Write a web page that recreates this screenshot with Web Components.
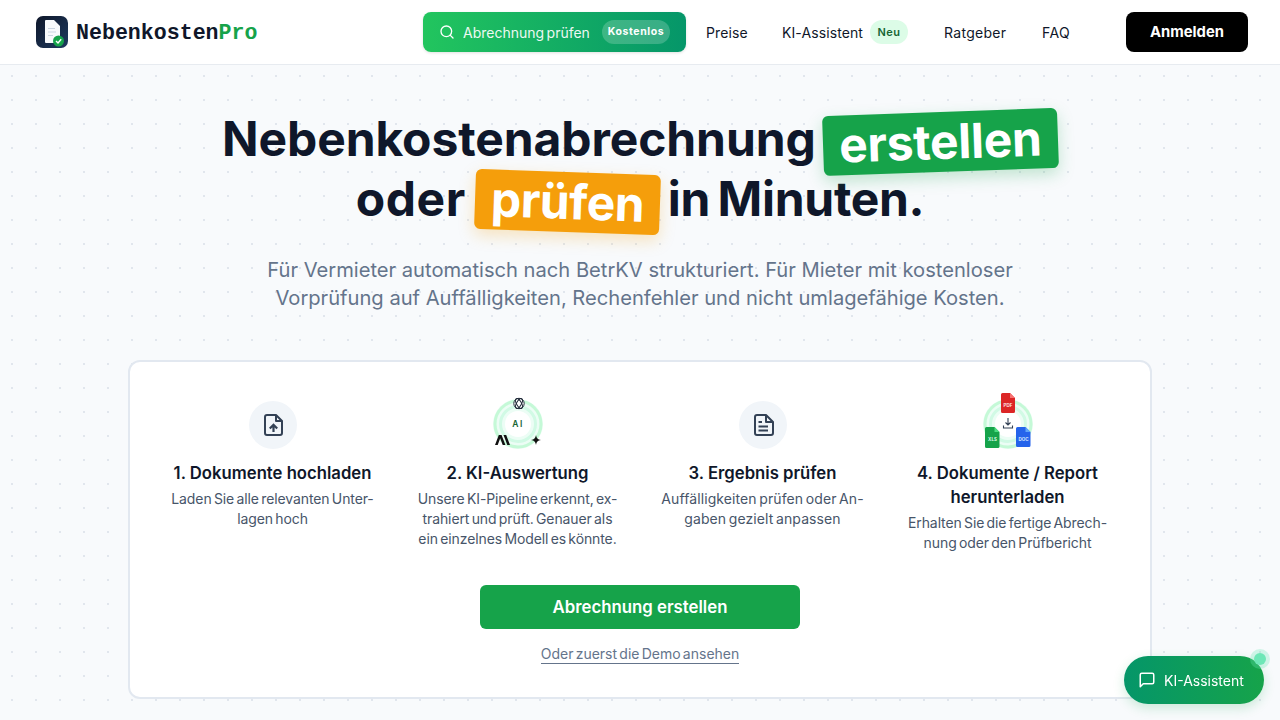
<!DOCTYPE html>
<html lang="de">
<head>
<meta charset="utf-8">
<title>NebenkostenPro</title>
<style>
    html, body { margin: 0; height: 720px; overflow: hidden; }
    body { font-family: Inter, "Liberation Sans", sans-serif; color: #0f172a; background: #f8fafc; }
    svg { overflow: visible; }
</style>
</head>
<body>
<site-header></site-header>
<main-hero>
    <hero-title></hero-title>
    <steps-card>
        <step-item heading="1. Dokumente hochladen" text="Laden Sie alle relevanten Unter-<br>lagen hoch">
            <svg slot="icon" width="48" height="48" viewBox="0 0 48 48">
                <circle cx="24" cy="24" r="24" fill="#f1f5f9"/>
                <path d="M27 14h-9a2 2 0 0 0-2 2v16a2 2 0 0 0 2 2h13a2 2 0 0 0 2-2V20z" fill="none" stroke="#334155" stroke-width="2" stroke-linejoin="round"/>
                <path d="M27 14v6h6" fill="none" stroke="#334155" stroke-width="2" stroke-linejoin="round"/>
                <path d="M24.500 31v-7M20.800 27.500l3.700-3.700 3.700 3.700" fill="none" stroke="#334155" stroke-width="2.200"/>
            </svg>
        </step-item>
        <step-item heading="2. KI-Auswertung" text="Unsere KI-Pipeline erkennt, ex-<br>trahiert und prüft. Genauer als<br>ein einzelnes Modell es könnte.">
            <svg slot="icon" width="60" height="60" viewBox="0 0 60 60" style="margin:-7px -6px -5px">
                <circle cx="30" cy="30" r="25" fill="#ecfdf5"/>
                <circle cx="30" cy="30" r="23" fill="none" stroke="#bbf7d0" stroke-width="3" opacity=".8"/>
                <circle cx="30" cy="30" r="17.500" fill="none" stroke="#d1fae5" stroke-width="3"/>
                <circle cx="30" cy="30" r="13" fill="#fff"/>
                <text x="30" y="33" text-anchor="middle" font-family="Inter, sans-serif" font-size="8.500" font-weight="600" letter-spacing="1.400" fill="#166534">AI</text>
                <g fill="none" stroke="#1f2937" stroke-width="1">
                    <circle cx="31" cy="9.500" r="5.200" fill="#fff"/>
                    <ellipse cx="31" cy="9.500" rx="5.500" ry="2.400" transform="rotate(60 31 9.500)"/>
                    <ellipse cx="31" cy="9.500" rx="5.500" ry="2.400" transform="rotate(-60 31 9.500)"/>
                </g>
                <path d="M7 51l3.800-10h2.800l3.800 10h-2.700l-2.500-6.800-2.500 6.800zM15.500 41h2.700l3.800 10h-2.700z" fill="#111"/>
                <path d="M48 41c.7 3.400 1.600 4.300 5 5-3.400.7-4.300 1.600-5 5-.7-3.400-1.600-4.300-5-5 3.400-.7 4.300-1.600 5-5z" fill="#111"/>
            </svg>
        </step-item>
        <step-item style="--ls:.1px" heading="3. Ergebnis prüfen" text="Auffälligkeiten prüfen oder An-<br>gaben gezielt anpassen">
            <svg slot="icon" width="48" height="48" viewBox="0 0 48 48">
                <circle cx="24" cy="24" r="24" fill="#f1f5f9"/>
                <path d="M27 14h-9a2 2 0 0 0-2 2v16a2 2 0 0 0 2 2h14a2 2 0 0 0 2-2V21z" fill="none" stroke="#334155" stroke-width="2" stroke-linejoin="round"/>
                <path d="M27 14v7h7M19.500 21h3.500M19.500 25.500h9.500M19.500 29.500h9.500" fill="none" stroke="#334155" stroke-width="2" stroke-linejoin="round"/>
            </svg>
        </step-item>
        <step-item heading="4. Dokumente / Report<br>herunterladen" text="Erhalten Sie die fertige Abrech-<br>nung oder den Prüfbericht">
            <svg slot="icon" width="60" height="60" viewBox="0 0 60 60" style="margin:-7px -6px -5px">
                <circle cx="30" cy="30" r="25" fill="#ecfdf5"/>
                <circle cx="30" cy="30" r="23" fill="none" stroke="#bbf7d0" stroke-width="3" opacity=".8"/>
                <circle cx="30" cy="30" r="17.500" fill="none" stroke="#d1fae5" stroke-width="3"/>
                <circle cx="30" cy="30" r="13" fill="#fff"/>
                <path d="M30 24v6.500M27.500 28.500l2.500 2.500 2.500-2.500M25.500 31.500v2.500h9v-2.500" fill="none" stroke="#334155" stroke-width="1.100"/>
                <g transform="translate(23 -1)">
                    <path d="M1.500 0h7.500l5 5v13.500a1.500 1.500 0 0 1-1.500 1.500h-11a1.500 1.500 0 0 1-1.500-1.500v-17a1.500 1.500 0 0 1 1.500-1.500z" fill="#dc2626"/>
                    <path d="M9 0l5 5h-5z" fill="#f87171"/>
                    <text x="7" y="14" text-anchor="middle" font-family="Inter, sans-serif" font-size="4.500" font-weight="700" fill="#fee2e2">PDF</text>
                </g>
                <g transform="translate(7 33)">
                    <path d="M1.500 0h8l5 5v14.500a1.500 1.500 0 0 1-1.500 1.500h-11.500a1.500 1.500 0 0 1-1.500-1.500v-18a1.500 1.500 0 0 1 1.500-1.500z" fill="#16a34a"/>
                    <path d="M9.500 0l5 5h-5z" fill="#4ade80"/>
                    <text x="7.500" y="14" text-anchor="middle" font-family="Inter, sans-serif" font-size="4.500" font-weight="700" fill="#dcfce7">XLS</text>
                </g>
                <g transform="translate(38 33)">
                    <path d="M1.500 0h8l5 5v13.500a1.500 1.500 0 0 1-1.500 1.500h-11.500a1.500 1.500 0 0 1-1.500-1.500v-17a1.500 1.500 0 0 1 1.500-1.500z" fill="#2563eb"/>
                    <path d="M9.500 0l5 5h-5z" fill="#60a5fa"/>
                    <text x="7.500" y="13.500" text-anchor="middle" font-family="Inter, sans-serif" font-size="4.500" font-weight="700" fill="#dbeafe">DOC</text>
                </g>
            </svg>
        </step-item>
    </steps-card>
</main-hero>
<chat-fab></chat-fab>

<script>
class SiteHeader extends HTMLElement {
    constructor() {
        super();
        this.attachShadow({ mode: 'open' });
    }

    connectedCallback() {
        this.shadowRoot.innerHTML = `
            <style>
                :host {
                    display: flex;
                    align-items: center;
                    height: 64px;
                    padding: 0 32px 0 36px;
                    background: #fff;
                    border-bottom: 1px solid #e7ebf0;
                }
                .logo {
                    display: flex;
                    align-items: center;
                    gap: 8px;
                    font: 700 21.6px "Liberation Mono", monospace;
                    color: #0f172a;
                }
                .logo svg { display: block; }
                .logo div { padding-top: 2px; }
                .logo span { color: #16a34a; }
                nav {
                    display: flex;
                    align-items: center;
                    margin-left: auto;
                    font-size: 14px;
                    font-weight: 420;
                    color: #0f172a;
                }
                .check {
                    display: flex;
                    align-items: center;
                    box-sizing: border-box;
                    width: 263px;
                    height: 40px;
                    padding: 0 16px;
                    margin-right: 20px;
                    border-radius: 8px;
                    color: #fff;
                    background: linear-gradient(90deg, #22c55e, #059669);
                    box-shadow: 0 1px 3px rgba(0,0,0,0.12);
                }
                .check svg { margin-right: 8px; }
                .check .label { opacity: .92; white-space: nowrap; word-spacing: -1.500px; }
                .free {
                    width: 68px;
                    margin-left: auto;
                    height: 24px;
                    line-height: 24px;
                    text-align: center;
                    border-radius: 12px;
                    font-size: 10.500px;
                    font-weight: 700;
                    letter-spacing: .6px;
                    background: rgba(255,255,255,0.2);
                }
                .item { margin-right: 36px; white-space: nowrap; text-align: center; }
                .preise { width: 40px; letter-spacing: .1px; }
                .ki { width: 80px; margin-right: 8px; letter-spacing: .1px; }
                .ratgeber { width: 62px; letter-spacing: .3px; }
                .faq { width: 28px; letter-spacing: .4px; }
                .neu {
                    width: 38px;
                    height: 24px;
                    line-height: 24px;
                    margin-right: 36px;
                    text-align: center;
                    border-radius: 12px;
                    font-size: 11px;
                    font-weight: 600;
                    letter-spacing: .4px;
                    color: #166534;
                    background: #dcfce7;
                }
                .login {
                    box-sizing: border-box;
                    width: 122px;
                    height: 40px;
                    line-height: 40px;
                    margin-left: 20px;
                    text-align: center;
                    border-radius: 8px;
                    font-size: 14.800px;
                    font-weight: 700;
                    color: #fff;
                    background: #000;
                }
            </style>
            <div class="logo">
                <svg width="32" height="32" viewBox="0 0 32 32">
                    <defs>
                        <linearGradient id="lg" x1="0" y1="0" x2="1" y2="1">
                            <stop offset="0" stop-color="#0f172a"/>
                            <stop offset="1" stop-color="#1e3a5f"/>
                        </linearGradient>
                    </defs>
                    <rect width="32" height="32" rx="7" fill="url(#lg)"/>
                    <path d="M10 4h8l6 6v16a1 1 0 0 1-1 1H10a1 1 0 0 1-1-1V5a1 1 0 0 1 1-1z" fill="#f8fafc"/>
                    <path d="M12 12.500h7M12 16h8M12 19.500h5" stroke="#cbd5e1" stroke-width="1.200"/>
                    <circle cx="22.500" cy="25" r="5.500" fill="#16a34a"/>
                    <path d="M20 25l2 2 3.200-3.800" fill="none" stroke="#fff" stroke-width="1.400"/>
                </svg>
                <div>Nebenkosten<span>Pro</span></div>
            </div>
            <nav>
                <div class="check">
                    <svg width="16" height="16" viewBox="0 0 24 24" fill="none" stroke="#fff" stroke-width="2" stroke-linecap="round">
                        <circle cx="11" cy="11" r="8"/>
                        <path d="M21 21l-4.300-4.300"/>
                    </svg>
                    <span class="label">Abrechnung prüfen</span>
                    <span class="free">Kostenlos</span>
                </div>
                <div class="item preise">Preise</div>
                <div class="item ki">KI-Assistent</div>
                <div class="neu">Neu</div>
                <div class="item ratgeber">Ratgeber</div>
                <div class="item faq">FAQ</div>
                <div class="login">Anmelden</div>
            </nav>
        `;
    }
}

class MainHero extends HTMLElement {
    constructor() {
        super();
        this.attachShadow({ mode: 'open' });
        this.shadowRoot.innerHTML = `
            <style>
                :host {
                    display: block;
                    height: 655px;
                    padding: 0 128px;
                    background-color: #f8fafc;
                    background-image: radial-gradient(#e1e6ed 1px, transparent 1.500px);
                    background-size: 24px 24px;
                    background-position: 0 -1px;
                }
            </style>
            <slot></slot>
        `;
    }
}

class HeroTitle extends HTMLElement {
    constructor() {
        super();
        this.attachShadow({ mode: 'open' });
    }

    connectedCallback() {
        this.shadowRoot.innerHTML = `
            <style>
                :host {
                    display: block;
                    padding-top: 44px;
                    height: 251px;
                    text-align: center;
                }
                h1 {
                    margin: 0;
                    font-size: 48px;
                    line-height: 60px;
                    font-weight: 700;
                    letter-spacing: -0.1px;
                    word-spacing: -3.500px;
                    color: #0f172a;
                }
                .oder { letter-spacing: .6px; margin-right: 1px; }
                .rest { letter-spacing: -0.3px; }
                .tag {
                    display: inline-block;
                    padding: 0 16px;
                    border-radius: 6px;
                    color: #fff;
                }
                .green {
                    background: #16a34a;
                    letter-spacing: -0.3px;
                    transform: translateY(3px) rotate(-2deg);
                    box-shadow: 0 6px 16px rgba(22,163,74,0.25);
                }
                .amber {
                    background: #f59e0b;
                    letter-spacing: -0.5px;
                    transform: translateY(3px) rotate(2deg);
                    box-shadow: 0 6px 16px rgba(245,158,11,0.25);
                }
                p {
                    margin: 27px 0 0;
                    font-size: 20.150px;
                    line-height: 28px;
                    color: #64748b;
                }
            </style>
            <h1>Nebenkostenabrechnung <span class="tag green">erstellen</span><br><span class="oder">oder</span> <span class="tag amber">prüfen</span> <span class="rest">in Minuten.</span></h1>
            <p>Für Vermieter automatisch nach BetrKV strukturiert. Für Mieter mit kostenloser<br>Vorprüfung auf Auffälligkeiten, Rechenfehler und nicht umlagefähige Kosten.</p>
        `;
    }
}

class StepsCard extends HTMLElement {
    constructor() {
        super();
        this.attachShadow({ mode: 'open' });
        this.shadowRoot.innerHTML = `
            <style>
                :host {
                    display: block;
                    box-sizing: border-box;
                    height: 339px;
                    padding: 39px 32px 0;
                    background: #fff;
                    border: 2px solid #e2e8f0;
                    border-radius: 12px;
                }
                .grid {
                    display: grid;
                    grid-template-columns: repeat(4, 1fr);
                    column-gap: 24px;
                    height: 184px;
                }
                .cta {
                    display: flex;
                    flex-direction: column;
                    align-items: center;
                }
                .btn {
                    width: 320px;
                    height: 44px;
                    line-height: 44px;
                    text-align: center;
                    border-radius: 6px;
                    font-size: 16.800px;
                    font-weight: 600;
                    color: #fff;
                    background: #16a34a;
                }
                .demo {
                    margin-top: 16px;
                    font-size: 14px;
                    line-height: 18px;
                    word-spacing: -1.700px;
                    color: #64748b;
                    border-bottom: 1px solid #64748b;
                }
            </style>
            <div class="grid"><slot></slot></div>
            <div class="cta">
                <div class="btn">Abrechnung erstellen</div>
                <div class="demo">Oder zuerst die Demo ansehen</div>
            </div>
        `;
    }
}

class StepItem extends HTMLElement {
    constructor() {
        super();
        this.attachShadow({ mode: 'open' });
    }

    connectedCallback() {
        this.shadowRoot.innerHTML = `
            <style>
                :host {
                    display: block;
                    text-align: center;
                }
                .icon {
                    display: flex;
                    justify-content: center;
                    height: 48px;
                    margin-bottom: 12px;
                }
                h3 {
                    margin: 0 0 4px;
                    font-size: 16.700px;
                    line-height: 24px;
                    font-weight: 600;
                    color: #0f172a;
                }
                p {
                    margin: 0;
                    font-size: 14px;
                    line-height: 20px;
                    letter-spacing: var(--ls, -0.1px);
                    word-spacing: -1.500px;
                    color: #475569;
                }
            </style>
            <div class="icon"><slot name="icon"></slot></div>
            <h3>${this.getAttribute('heading')}</h3>
            <p>${this.getAttribute('text')}</p>
        `;
    }
}

class ChatFab extends HTMLElement {
    constructor() {
        super();
        this.attachShadow({ mode: 'open' });
    }

    connectedCallback() {
        this.shadowRoot.innerHTML = `
            <style>
                :host {
                    position: fixed;
                    left: 1124px;
                    top: 656px;
                    display: flex;
                    align-items: center;
                    box-sizing: border-box;
                    width: 140px;
                    height: 48px;
                    padding-left: 14px;
                    gap: 8px;
                    border-radius: 24px;
                    font-size: 14px;
                    font-weight: 420;
                    color: #fff;
                    background: linear-gradient(90deg, #059669, #16a34a);
                    box-shadow: 0 4px 12px rgba(22,163,74,0.2);
                }
                .dot {
                    position: absolute;
                    right: -2px;
                    top: -3px;
                    width: 12px;
                    height: 12px;
                    border-radius: 50%;
                    background: #6ee7b7;
                    box-shadow: 0 0 0 4px rgba(110,231,183,0.3);
                }
            </style>
            <svg width="18" height="18" viewBox="0 0 24 24" fill="none" stroke="#fff" stroke-width="2" stroke-linejoin="round">
                <path d="M21 15a2 2 0 0 1-2 2H7l-4 4V5a2 2 0 0 1 2-2h14a2 2 0 0 1 2 2z"/>
            </svg>
            <span>KI-Assistent</span>
            <span class="dot"></span>
        `;
    }
}

customElements.define('site-header', SiteHeader);
customElements.define('main-hero', MainHero);
customElements.define('hero-title', HeroTitle);
customElements.define('steps-card', StepsCard);
customElements.define('step-item', StepItem);
customElements.define('chat-fab', ChatFab);
</script>
</body>
</html>
